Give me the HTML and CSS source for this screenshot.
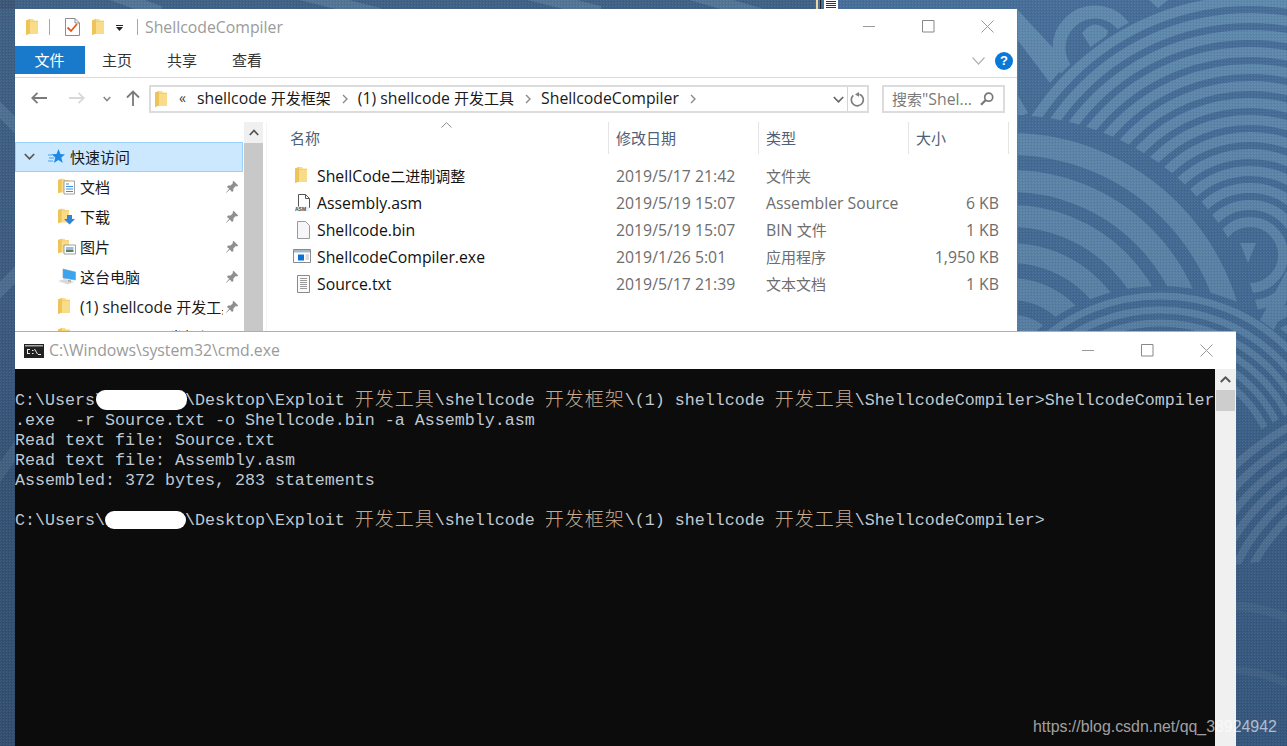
FILE: index.html
```html
<!DOCTYPE html>
<html lang="zh-CN">
<head>
<meta charset="utf-8">
<title>ShellcodeCompiler</title>
<link rel="stylesheet" href="styles.css">
</head>
<body>
<svg class="defs" aria-hidden="true">
  <defs>
    <symbol id="folder" viewBox="0 0 12 16">
      <path d="M0 1.5 4 0h3l1 1.5h4V15H2.5L0 16z" fill="#f8dc8a"/>
      <path d="M0 1.5 4 0v14.5L0 16z" fill="#eec35a"/>
      <path d="M4 2h8v1H4z" fill="#f3cf70"/>
    </symbol>
    <symbol id="pin" viewBox="0 0 14 14">
      <path d="M8.5 0.8 13.2 5.5 12 6.4 10.8 6 8.4 8.6 8.3 11 7 12.1 4.8 9.4 1.4 12.8 1 12.4 4.2 8.8 1.9 7 3.1 5.6 5.5 5.5 8 3.1 7.6 2z" fill="#8f8f8f"/>
    </symbol>
    <pattern id="weave" width="3" height="3" patternUnits="userSpaceOnUse">
      <rect x="0" y="0" width="1" height="1" fill="#fff" opacity=".08"/>
      <rect x="2" y="1" width="1" height="1" fill="#000" opacity=".08"/>
      <rect x="1" y="2" width="1" height="1" fill="#fff" opacity=".05"/>
    </pattern>
    <linearGradient id="fade" x1="0" y1="0" x2="0" y2="1">
      <stop offset="0" stop-color="#1f3555" stop-opacity="0"/>
      <stop offset=".4" stop-color="#1f3555" stop-opacity=".1"/>
      <stop offset=".62" stop-color="#1f3555" stop-opacity=".3"/>
      <stop offset="1" stop-color="#1f3555" stop-opacity=".42"/>
    </linearGradient>
  </defs>
</svg>

<main class="desktop">
  <svg class="wallpaper" viewBox="0 0 1287 746" width="1287" height="746" aria-hidden="true">
    <rect width="1287" height="746" fill="#466e98"/>
    <!-- top-left fabric -->
    <g fill="none" stroke="#5e88ac" stroke-width="12">
      <path d="M-20 90 40 150M-10 300 30 260M-20 500 30 430M100 -10 160 12M300 -6 380 14M520 -8 600 12M690 -6 760 14"/>
    </g>
    <rect width="815" height="9" fill="#2e3a50" opacity=".25"/>
    <rect width="15" height="746" fill="#2e3a50" opacity=".28"/>
    <!-- small wave at top -->
    <g fill="none" stroke="#5e88ac">
      <circle cx="1095" cy="48" r="36" stroke-width="13"/>
      <path d="M1082 33q12-16 26-2l-3 9-14 8z" fill="#5e88ac" stroke="none"/>
      <path d="M1016 8 1067 63 1050 83 1016 38z" fill="#5e88ac" stroke="none"/>
      <path d="M1016 92 1028 113 1016 118z" fill="#5e88ac" stroke="none"/>
      <path d="M1140 -8 1158 8 1168 0 1160 -10z" fill="#5e88ac" stroke="none"/>
    </g>
    <!-- fan wave -->
    <circle cx="1250" cy="255" r="262" fill="#466e98"/>
    <g fill="none" stroke="#5e88ac" stroke-width="10">
      <circle cx="1250" cy="255" r="254"/><circle cx="1250" cy="255" r="237"/>
      <circle cx="1250" cy="255" r="220"/><circle cx="1250" cy="255" r="203"/>
      <circle cx="1250" cy="255" r="186"/><circle cx="1250" cy="255" r="169"/>
      <circle cx="1250" cy="255" r="152"/><circle cx="1250" cy="255" r="135"/>
      <circle cx="1250" cy="255" r="118"/><circle cx="1250" cy="255" r="101"/>
      <circle cx="1250" cy="255" r="84"/><circle cx="1250" cy="255" r="67"/>
      <circle cx="1250" cy="255" r="50"/><circle cx="1250" cy="255" r="33"/>
    </g>
    <path d="M1240 243h16l-8 20z" fill="#5e88ac"/>
    <!-- large wave -->
    <circle cx="1010" cy="370" r="255" fill="#466e98"/>
    <g fill="none" stroke="#5e88ac">
      <circle cx="1010" cy="370" r="226" stroke-width="22"/>
      <circle cx="1010" cy="370" r="189" stroke-width="22"/>
      <circle cx="1010" cy="370" r="154" stroke-width="22"/>
      <circle cx="1010" cy="370" r="117" stroke-width="20"/>
      <circle cx="1010" cy="370" r="81" stroke-width="22"/>
      <circle cx="1010" cy="370" r="48" stroke-width="15"/>
    </g>
    <!-- thin wave at the bottom -->
    <circle cx="1160" cy="478" r="192" fill="#466e98"/>
    <g fill="none" stroke="#5e88ac" stroke-width="7">
      <circle cx="1160" cy="478" r="182"/><circle cx="1160" cy="478" r="168"/>
      <circle cx="1160" cy="478" r="155"/><circle cx="1160" cy="478" r="142"/>
      <circle cx="1160" cy="478" r="129"/><circle cx="1160" cy="478" r="116"/>
    </g>
    <path d="M1260 320 1287 270V300L1274 330z" fill="#5e88ac"/>
    <!-- diagonal wave on the right -->
    <circle cx="1400" cy="640" r="252" fill="#466e98"/>
    <g fill="none" stroke="#6288ac" stroke-width="8">
      <circle cx="1400" cy="640" r="240"/><circle cx="1400" cy="640" r="225"/>
      <circle cx="1400" cy="640" r="210"/><circle cx="1400" cy="640" r="195"/>
      <circle cx="1400" cy="640" r="180"/><circle cx="1400" cy="640" r="165"/>
    </g>
    <!-- dark lower area -->
    <circle cx="1300" cy="1010" r="450" fill="#466e98"/>
    <g fill="none" stroke="#53799f">
      <path d="M1236 606q28 2 51 12" stroke-width="9"/>
      <path d="M1236 670q28 2 51 14" stroke-width="8"/>
    </g>
    <rect width="1287" height="746" fill="url(#fade)"/>
    <rect width="1287" height="746" fill="url(#weave)"/>
    <!-- desktop icon fragment above the window -->
    <path d="M816 0h2v9h-2z" fill="#e9d9a0"/>
    <path d="M820 0h1v9h-1z" fill="#20242c"/>
    <path d="M824 0h14v9h-14z" fill="#fff"/>
    <path d="M826 1h10v1h-10zM826 3h10v1h-10zM826 5h10v1h-10zM826 7h10v1h-10z" fill="#333"/>
  </svg>

  <section class="win explorer">
    <header class="titlebar">
      <svg class="ic-folder"><use href="#folder"/></svg>
      <span class="vsep sep-a"></span>
      <svg class="ic-check" viewBox="0 0 15 18">
        <path d="M.5.5h9.500l4.500 4.500v12.500H.5z" fill="#fff" stroke="#8c8c8c"/>
        <path d="M10 .5v4.500h4.500" fill="none" stroke="#8c8c8c"/>
        <path d="M2.500 9.500 6 13l6-7" fill="none" stroke="#e2591d" stroke-width="1.800"/>
      </svg>
      <svg class="ic-folder ic-folder2"><use href="#folder"/></svg>
      <svg class="ic-drop" viewBox="0 0 7 6"><path d="M0 0h7v1H0zM0 2h7L3.500 6z" fill="#222"/></svg>
      <span class="vsep sep-b"></span>
      <span class="wintitle">ShellcodeCompiler</span>
      <div class="caption">
        <svg class="cap-btn" viewBox="0 0 13 13"><path d="M0 6.500h12" stroke="#999" fill="none"/></svg>
        <svg class="cap-btn" viewBox="0 0 13 13"><path d="M.5.5h11.500v11.500H.5z" stroke="#888" fill="none"/></svg>
        <svg class="cap-btn" viewBox="0 0 13 13"><path d="M.5.5l12 12M12.500.5l-12 12" stroke="#999" fill="none"/></svg>
      </div>
    </header>

    <nav class="ribbon">
      <span class="tab tab-file">文件</span>
      <span class="tab">主页</span>
      <span class="tab">共享</span>
      <span class="tab">查看</span>
      <svg class="ribbon-chev" viewBox="0 0 13 8"><path d="M.5.500 6.500 7l6-6.500" fill="none" stroke="#b4b4b4" stroke-width="1.200"/></svg>
      <span class="help">?</span>
    </nav>

    <div class="addressrow">
      <svg class="nav-back" viewBox="0 0 16 12"><path d="M1 6h15M6.500.8 1.200 6l5.300 5.200" fill="none" stroke="#7a7a7a" stroke-width="1.800"/></svg>
      <svg class="nav-fwd" viewBox="0 0 16 12"><path d="M0 6h15M9.500.8 14.800 6l-5.300 5.200" fill="none" stroke="#d8d8d8" stroke-width="1.800"/></svg>
      <svg class="nav-down" viewBox="0 0 8 6"><path d="M.7 1 4 4.500 7.300 1" fill="none" stroke="#8a8a8a" stroke-width="1.600"/></svg>
      <svg class="nav-up" viewBox="0 0 14 16"><path d="M7 16V1.500M1 7.500l6-6 6 6" fill="none" stroke="#7a7a7a" stroke-width="1.800"/></svg>
      <div class="addressbox">
        <svg class="ic-folder addr-folder"><use href="#folder"/></svg>
        <span class="raquo">«</span>
        <span class="crumb">shellcode <span class="z">开发框架</span></span>
        <svg class="crumb-sep" viewBox="0 0 6 10"><path d="M1 1l4 4-4 4" fill="none" stroke="#8a8a8a" stroke-width="1.400"/></svg>
        <span class="crumb">(1) shellcode <span class="z">开发工具</span></span>
        <svg class="crumb-sep" viewBox="0 0 6 10"><path d="M1 1l4 4-4 4" fill="none" stroke="#8a8a8a" stroke-width="1.400"/></svg>
        <span class="crumb">ShellcodeCompiler</span>
        <svg class="crumb-sep" viewBox="0 0 6 10"><path d="M1 1l4 4-4 4" fill="none" stroke="#8a8a8a" stroke-width="1.400"/></svg>
        <svg class="addr-chev" viewBox="0 0 11 7"><path d="M.8 1 5.500 5.800 10.200 1" fill="none" stroke="#666" stroke-width="1.700"/></svg>
        <span class="addr-refresh">
          <svg viewBox="0 0 15 15"><path d="M9.500 2.200A6 6 0 1 1 3.300 3.300" fill="none" stroke="#7d7d7d" stroke-width="1.700"/><path d="M8 0v4.800l-4-2.400z" fill="#7d7d7d" transform="translate(1 0)"/></svg>
        </span>
      </div>
      <div class="searchbox">
        <span class="search-text"><span class="z">搜索</span>"Shel...</span>
        <svg class="search-ic" viewBox="0 0 14 14"><circle cx="8.700" cy="5.200" r="4" fill="none" stroke="#777" stroke-width="1.700"/><path d="M5.800 8 1 12.800" stroke="#777" stroke-width="2.200" fill="none"/></svg>
      </div>
    </div>

    <div class="browser">
      <aside class="tree">
        <div class="tree-row tree-head">
          <svg class="tree-chev" viewBox="0 0 11 7"><path d="M.8 1 5.500 5.800 10.200 1" fill="none" stroke="#555" stroke-width="1.700"/></svg>
          <svg class="ic-star" viewBox="0 0 17 15"><path d="M10.500 0l1.900 5 4.600.4-3.700 3.200 1.400 5.400-4.200-2.900-4.700 2.900 1.500-5.400L3.500 5.300l5-.3z" fill="#1f8ae6"/><path d="M0 6h4M1 9h5M0 12h5" stroke="#4a9de8" fill="none"/></svg>
          <span class="z">快速访问</span>
        </div>
        <div class="tree-row">
          <svg class="tree-ic" viewBox="0 0 18 17"><use href="#folder" width="11" height="16"/><path d="M6 3h10.500v13H6z" fill="#fff" stroke="#8a8a8a" stroke-width=".8"/><path d="M8 6h3M8 8.500h7M8 11h7M8 13.500h7" stroke="#3b8ed8"/></svg>
          <span class="tree-label z">文档</span>
          <svg class="ic-pin"><use href="#pin"/></svg>
        </div>
        <div class="tree-row">
          <svg class="tree-ic" viewBox="0 0 18 17"><use href="#folder" width="11" height="16"/><path d="M9 7h5v4h3l-5.500 5.500L6 11h3z" fill="#2f86d8"/></svg>
          <span class="tree-label z">下载</span>
          <svg class="ic-pin"><use href="#pin"/></svg>
        </div>
        <div class="tree-row">
          <svg class="tree-ic" viewBox="0 0 18 17"><use href="#folder" width="11" height="16"/><path d="M6 7h11.500v9H6z" fill="#fff" stroke="#8a8a8a" stroke-width=".8"/><path d="M8 9h7.500v3H8z" fill="#8fc0e8"/><path d="M8 12h7.500v2H8z" fill="#5f7f55"/></svg>
          <span class="tree-label z">图片</span>
          <svg class="ic-pin"><use href="#pin"/></svg>
        </div>
        <div class="tree-row">
          <svg class="tree-ic" viewBox="0 0 18 17"><path d="M5 1l12.500 3v8L5 10z" fill="#3ba4ee" stroke="#7a9ab5" stroke-width=".6"/><path d="M0 13 7 11l9 3-6 2.500z" fill="#d9d9d9"/><path d="M10 12h3v2h-3z" fill="#b5b5b5"/></svg>
          <span class="tree-label z">这台电脑</span>
          <svg class="ic-pin"><use href="#pin"/></svg>
        </div>
        <div class="tree-row">
          <svg class="tree-ic" viewBox="0 0 18 17"><use href="#folder" width="12" height="16"/></svg>
          <span class="tree-label">(1) shellcode <span class="z">开发工具</span></span>
          <svg class="ic-pin"><use href="#pin"/></svg>
        </div>
        <div class="tree-row">
          <svg class="tree-ic" viewBox="0 0 18 17"><use href="#folder" width="12" height="16"/></svg>
          <span class="tree-label">shellcode <span class="z">开发框架</span></span>
          <svg class="ic-pin"><use href="#pin"/></svg>
        </div>
      </aside>
      <div class="tree-scroll">
        <svg class="tree-up" viewBox="0 0 10 7"><path d="M.8 6 5 1.500 9.200 6" fill="none" stroke="#555" stroke-width="1.800"/></svg>
        <span class="tree-thumb"></span>
      </div>

      <div class="files">
        <svg class="sort" viewBox="0 0 11 6"><path d="M.5 5.500 5.500.7l5 4.800" fill="none" stroke="#8a8a8a"/></svg>
        <div class="file-head">
          <span class="col col-name">名称</span>
          <span class="col">修改日期</span>
          <span class="col">类型</span>
          <span class="col">大小</span>
        </div>
        <div class="file-list">
          <div class="file-row">
            <span class="cell-name"><svg class="file-ic" viewBox="0 0 16 18"><use href="#folder" x="0" width="12" height="16"/></svg><span>ShellCode<span class="z">二进制调整</span></span></span>
            <span class="cell">2019/5/17 21:42</span><span class="cell z">文件夹</span><span class="cell cell-size"></span>
          </div>
          <div class="file-row">
            <span class="cell-name"><svg class="file-ic" viewBox="0 0 16 18"><path d="M3.500.5h7l4 4v9h-11z" fill="#fff" stroke="#555"/><path d="M10.500.5v4h4" fill="none" stroke="#555"/><path d="M0 12.500h14v5H0z" fill="#f2f2f2"/><text class="asm-tag" x="0" y="17">ASM</text></svg><span>Assembly.asm</span></span>
            <span class="cell">2019/5/19 15:07</span><span class="cell">Assembler Source</span><span class="cell cell-size">6 KB</span>
          </div>
          <div class="file-row">
            <span class="cell-name"><svg class="file-ic" viewBox="0 0 16 18"><path d="M2.500.5h8l4 4v13h-12z" fill="#f6f6f8" stroke="#9a9a9a"/></svg><span>Shellcode.bin</span></span>
            <span class="cell">2019/5/19 15:07</span><span class="cell">BIN <span class="z">文件</span></span><span class="cell cell-size">1 KB</span>
          </div>
          <div class="file-row">
            <span class="cell-name"><svg class="file-ic file-ic-wide" viewBox="0 0 18 15"><path d="M.5.500h17v13H.5z" fill="#fff" stroke="#8a8a8a"/><path d="M1 1h16v2.500H1z" fill="#a9b8c8"/><path d="M5 5.500h6v6H5z" fill="#0a72d6"/><path d="M12.500 6H16M12.500 8H16M12.500 10H16" stroke="#b8b8b8"/></svg><span>ShellcodeCompiler.exe</span></span>
            <span class="cell">2019/1/26 5:01</span><span class="cell z">应用程序</span><span class="cell cell-size">1,950 KB</span>
          </div>
          <div class="file-row">
            <span class="cell-name"><svg class="file-ic" viewBox="0 0 16 18"><path d="M2.500.5h12v17h-12z" fill="#fafafa" stroke="#8a8a8a"/><path d="M5 3.500h7M5 5.500h7M5 7.500h7M5 9.500h7M5 11.500h7M5 13.500h7" stroke="#9a9a9a"/></svg><span>Source.txt</span></span>
            <span class="cell">2019/5/17 21:39</span><span class="cell z">文本文档</span><span class="cell cell-size">1 KB</span>
          </div>
        </div>
      </div>
    </div>
  </section>

  <section class="win cmd">
    <header class="cmd-title">
      <svg class="cmd-ic" viewBox="0 0 20 14">
        <path d="M0 0h20v14H0z" fill="#222"/>
        <path d="M1 1h18v1.500H1z" fill="#a8a8a8"/>
        <path d="M3 5h3v1H3zM3 6h1v3H3zM3 9h3v1H3zM8 6h1.500v1H8zM8 9h1.500v1H8zM11 5l3 5h-1l-3-5zM14 10h3v1h-3z" fill="#eee"/>
      </svg>
      <span class="cmd-name">C:\Windows\system32\cmd.exe</span>
      <div class="caption caption-cmd">
        <svg class="cap-btn" viewBox="0 0 13 13"><path d="M0 6.500h12" stroke="#999" fill="none"/></svg>
        <svg class="cap-btn" viewBox="0 0 13 13"><path d="M.5.5h11.500v11.500H.5z" stroke="#888" fill="none"/></svg>
        <svg class="cap-btn" viewBox="0 0 13 13"><path d="M.5.5l12 12M12.500.5l-12 12" stroke="#999" fill="none"/></svg>
      </div>
    </header>
    <div class="cmd-body">
      <div class="console">
        <div class="line"></div>
        <div class="line">C:\Users\xxxxxxxx\Desktop\Exploit <b>开发工具</b>\shellcode <b>开发框架</b>\(1) shellcode <b>开发工具</b>\ShellcodeCompiler&gt;ShellcodeCompiler</div>
        <div class="line">.exe  -r Source.txt -o Shellcode.bin -a Assembly.asm</div>
        <div class="line">Read text file: Source.txt</div>
        <div class="line">Read text file: Assembly.asm</div>
        <div class="line">Assembled: 372 bytes, 283 statements</div>
        <div class="line"></div>
        <div class="line">C:\Users\xxxxxxxx\Desktop\Exploit <b>开发工具</b>\shellcode <b>开发框架</b>\(1) shellcode <b>开发工具</b>\ShellcodeCompiler&gt;</div>
        <span class="blot blot-a"></span>
        <span class="blot blot-b"></span>
      </div>
      <div class="cmd-scroll">
        <svg class="cmd-up" viewBox="0 0 11 7"><path d="M.8 6 5.500 1.400 10.200 6" fill="none" stroke="#555" stroke-width="2"/></svg>
        <span class="cmd-thumb"></span>
      </div>
    </div>
  </section>

  <div class="watermark">https://blog.csdn.net/qq_38924942</div>
</main>
</body>
</html>
```
FILE: styles.css
```css
* { box-sizing: border-box; }
html, body { margin: 0; padding: 0; width: 1287px; height: 746px; overflow: hidden; }
body { font-family: "Open Sans", "Noto Sans CJK SC", sans-serif; font-size: 15.8px; line-height: 20px; color: #1a1a1a; }
svg { display: block; flex: none; }
.z { font-size: 15px; }
.defs { position: absolute; width: 0; height: 0; }
.desktop { position: relative; width: 1287px; height: 746px; overflow: hidden; }
.wallpaper { position: absolute; left: 0; top: 0; }
.win { position: absolute; background: #fff; overflow: hidden; }

/* explorer */
.explorer { left: 15px; top: 9px; width: 1003px; height: 360px; border-right: 1px solid #6d7884; display: flex; flex-direction: column; }
.titlebar { height: 35px; display: flex; align-items: center; flex: none; }
.ic-folder { width: 12px; height: 16px; margin-left: 11px; }
.ic-folder2 { margin-left: 12px; }
.vsep { width: 1px; height: 16px; background: #a8a8a8; }
.sep-a { margin-left: 11px; }
.ic-check { width: 15px; height: 18px; margin-left: 15px; }
.ic-drop { width: 7px; height: 6px; margin-left: 12px; margin-top: 2px; }
.sep-b { margin-left: 14px; }
.wintitle { margin-left: 7px; color: #9b9b9b; }
.caption { margin-left: auto; display: flex; gap: 46px; padding-right: 23px; }
.cap-btn { width: 13px; height: 13px; }

.ribbon { height: 34px; border-bottom: 1px solid #dadada; display: flex; align-items: flex-start; flex: none; padding-top: 2px; }
.tab { width: 65px; height: 28px; line-height: 28px; padding-right: 1px; text-align: center; font-size: 15px; color: #333; }
.tab-file { width: 70px; background: #1979ca; color: #fff; }
.ribbon-chev { width: 13px; height: 8px; margin: 11px 0 0 auto; }
.help { width: 18px; height: 18px; margin: 6px 4px 0 10px; border-radius: 50%; background: #0a78d7; color: #fff; font: bold 13px/18px "Liberation Sans", sans-serif; text-align: center; }

.addressrow { height: 36px; padding-top: 7px; display: flex; align-items: flex-start; flex: none; }
.nav-back { width: 16px; height: 12px; margin: 7px 0 0 16px; }
.nav-fwd { width: 16px; height: 12px; margin: 7px 0 0 22px; }
.nav-down { width: 8px; height: 6px; margin: 11px 0 0 18px; }
.nav-up { width: 14px; height: 16px; margin: 5px 0 0 15px; }
.addressbox { width: 720px; height: 28px; margin-left: 9px; border: 2px solid #dcdcdc; display: flex; align-items: center; }
.addr-folder { margin-left: 4px; }
.raquo { margin-left: 12px; width: 18px; font-size: 14px; color: #444; padding-bottom: 3px; }
.crumb { color: #1a1a1a; white-space: nowrap; padding-bottom: 2px; }
.crumb-sep { width: 6px; height: 10px; margin: 0 10px 0 11px; }
.addr-chev { width: 11px; height: 7px; margin-left: auto; }
.addr-refresh { width: 20px; height: 24px; margin-left: 3px; border-left: 1px solid #d4d4d4; display: flex; align-items: center; justify-content: center; }
.addr-refresh svg { width: 15px; height: 15px; }
.searchbox { width: 123px; height: 28px; margin-left: 13px; border: 2px solid #dcdcdc; display: flex; align-items: center; }
.search-text { margin-left: 8px; color: #7a7a7a; white-space: nowrap; width: 88px; padding-bottom: 1px; }
.search-ic { width: 14px; height: 14px; }

.browser { display: flex; flex: 1; min-height: 0; padding-top: 8px; }
.tree { width: 228px; padding-top: 20px; flex: none; overflow: hidden; }
.tree-row { height: 30px; display: flex; align-items: center; padding-left: 43px; padding-bottom: 1px; }
.tree-head { padding-left: 8px; background: #cce8ff; border: 1px solid #99d1ff; }
.tree-chev { width: 11px; height: 7px; }
.ic-star { width: 17px; height: 15px; margin-left: 13px; margin-right: 5px; }
.tree-ic { width: 18px; height: 17px; }
.tree-label { width: 143px; margin-left: 4px; white-space: nowrap; overflow: hidden; }
.ic-pin { width: 14px; height: 14px; margin-left: 2px; }
.tree-scroll { width: 19px; margin-left: 1px; background: #f0f0f0; flex: none; display: flex; flex-direction: column; align-items: center; position: relative; }
.tree-up { width: 10px; height: 7px; margin-top: 7px; }
.tree-thumb { position: absolute; left: 0; top: 21px; width: 100%; height: 300px; background: #c8c8c8; }

.files { flex: 1; position: relative; margin-left: 3px; border-left: 1px solid #f4f4f4; }
.sort { position: absolute; left: 174px; top: 0; width: 11px; height: 6px; }
.file-head { display: grid; grid-template-columns: 342px 150px 150px 100px; height: 32px; }
.col { border-right: 1px solid #e5e5e5; padding: 5px 0 0 7px; color: #4c607a; font-size: 15px; line-height: 22px; }
.col-name { padding-left: 23px; }
.file-list { padding-top: 9px; }
.file-row { display: grid; grid-template-columns: 342px 150px 150px 90px; height: 27px; padding-bottom: 2px; align-items: center; white-space: nowrap; }
.cell-name { display: flex; align-items: center; padding-left: 28px; gap: 6px; color: #111; }
.file-ic { width: 16px; height: 18px; }
.file-ic-wide { width: 18px; height: 15px; margin-left: -2px; }
.cell { padding-left: 7px; color: #6d6d6d; }
.cell-size { padding-left: 0; text-align: right; }
.asm-tag { font: bold 5px "Liberation Sans", sans-serif; fill: #444; }

/* console */
.cmd { left: 15px; top: 331px; width: 1221px; height: 415px; border-top: 1px solid #a9b0b8; display: flex; flex-direction: column; }
.cmd-title { height: 37px; display: flex; align-items: center; flex: none; }
.cmd-ic { width: 20px; height: 14px; margin-left: 9px; }
.cmd-name { margin-left: 5px; color: #9a9a9a; white-space: nowrap; padding-bottom: 1px; }
.cmd-body { flex: 1; display: flex; min-height: 0; }
.console { width: 1200px; background: #0c0c0c; position: relative; overflow: hidden; padding-top: 2px; }
.line { height: 20px; line-height: 20px; font-family: "Liberation Mono", monospace; font-size: 16.667px; color: #bfc8d3; white-space: pre; }
.line b { font-family: "Noto Sans CJK SC", sans-serif; font-weight: 300; font-size: 19px; letter-spacing: 1px; line-height: 0; vertical-align: -1px; color: #c7ab90; }
.blot { position: absolute; background: #fff; }
.blot-a { left: 81px; top: 21px; width: 91px; height: 20px; border-radius: 10px 9px 11px 12px; }
.blot-b { left: 90px; top: 142px; width: 81px; height: 18px; border-radius: 9px; }
.cmd-scroll { width: 21px; background: #f0f0f0; position: relative; flex: none; display: flex; justify-content: center; }
.cmd-up { width: 11px; height: 7px; margin-top: 7px; }
.cmd-thumb { position: absolute; left: 1px; top: 21px; width: 19px; height: 21px; background: #cdcdcd; }

.watermark { position: absolute; left: 1033px; top: 717px; font-family: "Liberation Sans", sans-serif; font-size: 15.9px; line-height: 20px; color: rgba(255, 255, 255, .62); white-space: nowrap; }
```
